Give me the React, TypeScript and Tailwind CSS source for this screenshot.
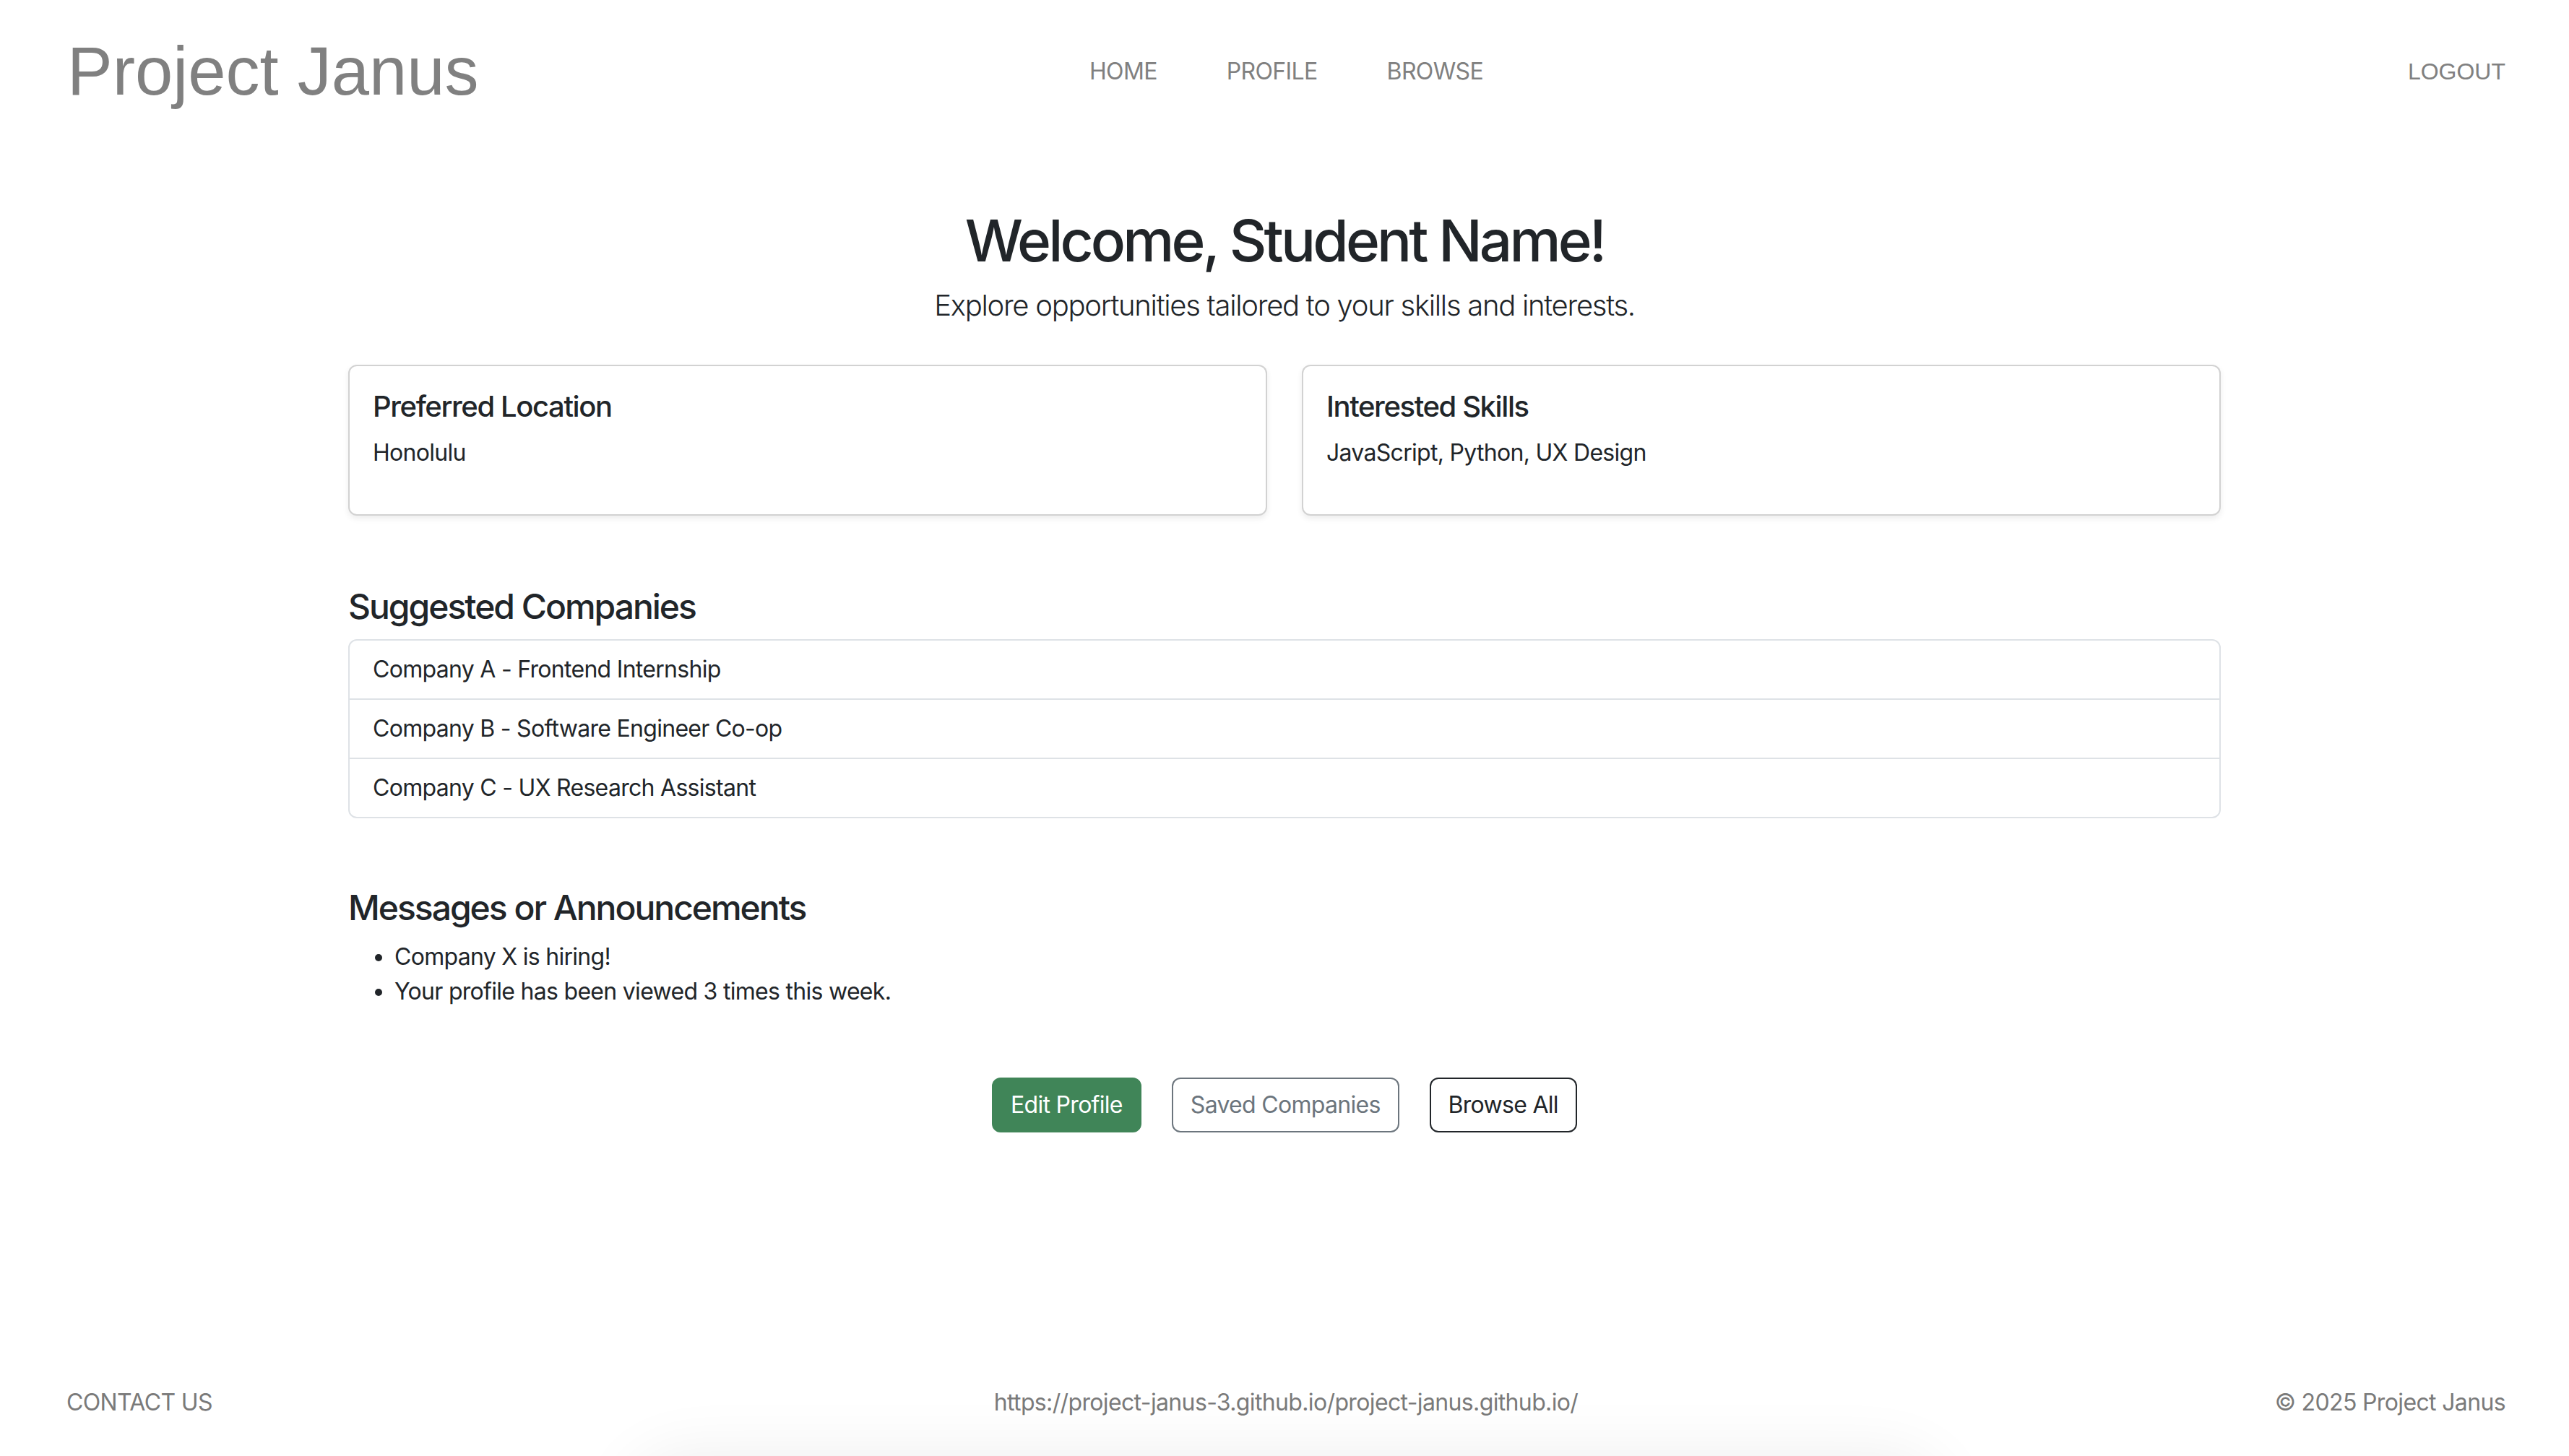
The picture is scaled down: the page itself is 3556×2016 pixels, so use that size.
export default function App() {
  const cards = [
    { title: "Preferred Location", text: "Honolulu" },
    { title: "Interested Skills", text: "JavaScript, Python, UX Design" },
  ];
  const companies = [
    "Company A - Frontend Internship",
    "Company B - Software Engineer Co-op",
    "Company C - UX Research Assistant",
  ];
  return (
    <div className="relative flex h-[2016px] flex-col overflow-hidden bg-white font-['Inter',sans-serif] text-[#212529]">
      <header className="grid h-[198px] grid-cols-[1fr_auto_1fr] items-center pl-[93px] pr-[88px]">
        <div className="font-['Liberation_Sans',Arial,sans-serif] text-[94px] leading-none text-[#808080]">
          Project Janus
        </div>
        <nav className="flex items-center">
          {["HOME", "PROFILE", "BROWSE"].map((l) => (
            <a key={l} className="px-[48px] text-[32px] leading-none tracking-[-0.02em] text-[#808080]">
              {l}
            </a>
          ))}
        </nav>
        <div className="justify-self-end font-['Liberation_Sans',Arial,sans-serif] text-[32px] leading-none text-[#808080]">
          LOGOUT
        </div>
      </header>

      <main className="flex-1">
        <div className="mx-auto w-[2640px] px-[24px]">
          <div className="text-center">
            <h1 className="mt-[87px] text-[80px] font-medium leading-[96px] tracking-[-0.048em]">
              Welcome, Student Name!
            </h1>
            <p className="mt-[12px] text-[40px] font-light leading-[60px] tracking-[-0.032em]">
              Explore opportunities tailored to your skills and interests.
            </p>
          </div>

          <div className="mt-[52px] grid grid-cols-2 gap-[48px]">
            {cards.map((c) => (
              <div
                key={c.title}
                className="rounded-[12px] border-2 border-[rgba(0,0,0,0.175)] bg-white p-[32px] shadow-[0_4px_8px_rgba(0,0,0,0.075)]"
              >
                <h5 className="mb-[16px] text-[40px] font-medium leading-[48px] tracking-[-0.035em]">{c.title}</h5>
                <p className="mb-[29px] text-[32px] leading-[48px] tracking-[-0.022em]">{c.text}</p>
              </div>
            ))}
          </div>

          <h4 className="mt-[97px] text-[48px] font-medium leading-[57.6px] tracking-[-0.042em]">Suggested Companies</h4>
          <div className="mt-[16px] divide-y-2 divide-[#dee2e6] rounded-[12px] border-2 border-[#dee2e6]">
            {companies.map((c) => (
              <div key={c} className="px-[32px] py-[16px] text-[32px] leading-[48px] tracking-[-0.022em]">
                {c}
              </div>
            ))}
          </div>

          <h4 className="mt-[95px] text-[48px] font-medium leading-[57.6px] tracking-[-0.042em]">
            Messages or Announcements
          </h4>
          <ul className="mt-[16px] list-disc pl-[64px] text-[32px] leading-[48px] tracking-[-0.022em]">
            <li>Company X is hiring!</li>
            <li>Your profile has been viewed 3 times this week.</li>
          </ul>

          <div className="mt-[95px] flex justify-center gap-[42px] text-[32px] leading-[48px] tracking-[-0.022em]">
            <button className="rounded-[12px] border-2 border-[#408558] bg-[#408558] px-[24px] py-[12px] text-white">
              Edit Profile
            </button>
            <button className="rounded-[12px] border-2 border-[#6c757d] bg-white px-[24px] py-[12px] text-[#6c757d]">
              Saved Companies
            </button>
            <button className="rounded-[12px] border-2 border-[#212529] bg-white px-[24px] py-[12px] text-[#212529]">
              Browse All
            </button>
          </div>
        </div>
      </main>

      <footer className="grid h-[146px] grid-cols-3 pl-[92px] pr-[88px] pt-[48px] text-[32px] leading-[48px] tracking-[-0.02em] text-[#7a7a7a]">
        <div>CONTACT US</div>
        <div className="text-center">https://project-janus-3.github.io/project-janus.github.io/</div>
        <div className="text-right">© 2025 Project Janus</div>
      </footer>

      <div className="absolute left-[900px] top-[2045px] h-[300px] w-[1760px] rounded-[48px] bg-white shadow-[0_0_90px_30px_rgba(0,0,0,0.07)]" />
    </div>
  );
}
